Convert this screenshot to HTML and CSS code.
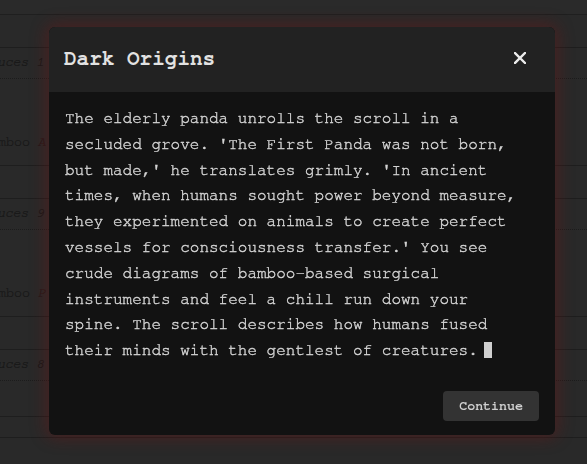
FILE: index.html
```html
<!DOCTYPE html>
<html>
<head>
<meta charset="utf-8">
<link rel="stylesheet" href="styles.css">
</head>
<body>
<div class="page">
  <div class="topbar"></div>
  <div class="list">
    <div class="card">
      <div class="card-top"><span class="shift">produces 1</span></div>
      <div class="card-main"><span class="shift2">Bamboo <i class="accent">A</i></span></div>
    </div>
    <div class="card">
      <div class="card-top"><span class="shift">produces 9</span></div>
      <div class="card-main"><span class="shift2">Bamboo <i class="accent">P</i></span></div>
    </div>
    <div class="card short">
      <div class="card-top"><span class="shift">produces 8</span></div>
      <div class="card-main"></div>
    </div>
    <div class="card tail"></div>
  </div>
</div>

<div class="overlay">
  <div class="modal">
    <div class="modal-header">
      <h2 class="modal-title">Dark Origins</h2>
      <button class="close" aria-label="Close">
        <svg width="12" height="12" viewBox="0 0 12 12"><path d="M1 1 L11 11 M11 1 L1 11" stroke="#ececec" stroke-width="2.4" stroke-linecap="square"/></svg>
      </button>
    </div>
    <div class="modal-body">
      <p class="story">The elderly panda unrolls the scroll in a secluded grove. 'The First Panda was not born, but made,' he translates grimly. 'In ancient times, when humans sought power beyond measure, they experimented on animals to create perfect vessels for consciousness transfer.' You see crude diagrams of bamboo-based surgical instruments and feel a chill run down your spine. The scroll describes how humans fused their minds with the gentlest of creatures.<span class="cursor"></span></p>
      <div class="actions">
        <button class="continue">Continue</button>
      </div>
    </div>
  </div>
</div>
</body>
</html>
```

FILE: styles.css
```css
html, body {
  margin: 0;
  padding: 0;
}
body {
  background: #292929;
  font-family: "Nimbus Mono PS", "Nimbus Mono L", "FreeMono", "Courier New", "Liberation Mono", monospace;
  width: 587px;
  height: 464px;
  overflow: hidden;
}
.page {
  height: 464px;
  overflow: hidden;
}
.topbar {
  height: 14px;
  background: #2a2a2a;
  border-bottom: 1px solid #1f1f1f;
}
.list {
  padding-top: 32px;
  display: flex;
  flex-direction: column;
  gap: 32px;
}
.card {
  border-top: 1px solid #1e1e1e;
  border-bottom: 1px solid #1e1e1e;
  background: #292929;
}
.card-top {
  height: 30px;
  border-bottom: 1px dotted #1c1c1c;
  font-size: 13px;
  line-height: 30px;
  color: #161616;
  font-style: italic;
  white-space: nowrap;
  overflow: hidden;
  -webkit-text-stroke: 0.2px #161616;
}
.card-main {
  height: 86px;
  font-size: 13.3px;
  color: #171717;
  white-space: nowrap;
  overflow: hidden;
  display: flex;
  align-items: flex-end;
  -webkit-text-stroke: 0.2px #171717;
}
.card-main span {
  line-height: 26px;
  margin-bottom: 10px;
}
.card.short .card-main {
  height: 35px;
}
.card.tail {
  height: 40px;
  margin-top: -12px;
}
.shift {
  margin-left: -34px;
}
.shift2 {
  margin-left: -18px;
}
.accent {
  color: #2a1616;
}

.overlay {
  position: fixed;
  inset: 0;
}
.modal {
  position: absolute;
  left: 49px;
  top: 27px;
  width: 506px;
  border-radius: 6px;
  background: #121212;
  overflow: hidden;
  box-shadow: 0 0 16px 3px rgba(110, 22, 22, 0.45);
}
.modal-header {
  height: 65px;
  background: #222222;
  display: flex;
  align-items: center;
  justify-content: space-between;
  padding: 0 28px 0 15px;
}
.modal-title {
  margin: 0;
  font-size: 21px;
  font-weight: bold;
  color: #e2e2e2;
  line-height: 1;
  margin-top: -2px;
}
.close {
  background: none;
  border: 0;
  padding: 0;
  width: 14px;
  height: 14px;
  display: flex;
  align-items: center;
  justify-content: center;
  margin-top: -3px;
}
.modal-body {
  padding: 14px 30px 14px 16px;
}
.story {
  margin: 0;
  font-size: 16px;
  line-height: 25.8px;
  color: #d4d4d4;
  -webkit-text-stroke: 0.4px #d4d4d4;
}
.cursor {
  display: inline-block;
  width: 8px;
  height: 16px;
  margin-left: 6px;
  background: #cfcfcf;
  vertical-align: -3px;
}
.actions {
  display: flex;
  justify-content: flex-end;
  margin-top: 27px;
  margin-right: -14px;
}
.continue {
  height: 30px;
  padding: 0 16px;
  border: 0;
  border-radius: 4px;
  background: #333333;
  color: #d0d0d0;
  font-family: inherit;
  font-weight: bold;
  font-size: 13.3px;
}
```
